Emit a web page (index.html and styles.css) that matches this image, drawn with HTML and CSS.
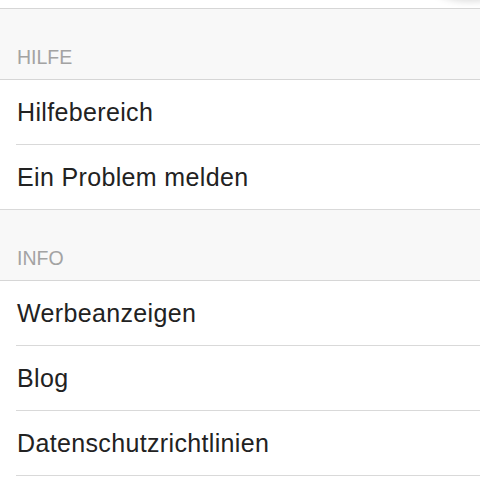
FILE: index.html
```html
<!DOCTYPE html>
<html lang="de">
<head>
<meta charset="utf-8">
<link rel="stylesheet" href="styles.css">
</head>
<body>
<div class="page">
  <div class="prev"></div>
  <div class="fab-shadow"></div>
  <div class="section-header"><span>HILFE</span></div>
  <ul class="list">
    <li class="row">Hilfebereich</li>
    <li class="row last">Ein Problem melden</li>
  </ul>
  <div class="section-header"><span>INFO</span></div>
  <ul class="list">
    <li class="row">Werbeanzeigen</li>
    <li class="row">Blog</li>
    <li class="row">Datenschutzrichtlinien</li>
  </ul>
</div>
</body>
</html>
```
FILE: styles.css
```css
html, body {
  margin: 0;
  padding: 0;
  background: #ffffff;
}
.page {
  position: relative;
  width: 480px;
  height: 480px;
  overflow: hidden;
  font-family: "Liberation Sans", Arial, sans-serif;
}
.prev {
  height: 8px;
  background: #ffffff;
  border-bottom: 1px solid #d6d6d6;
}
.fab-shadow {
  position: absolute;
  right: -30px;
  top: -34px;
  width: 80px;
  height: 36px;
  border-radius: 50%;
  background: rgba(0,0,0,0.12);
  filter: blur(3px);
}
.section-header {
  background: #f8f8f8;
  border-bottom: 1px solid #d6d6d6;
  display: flex;
  align-items: flex-end;
  padding: 0 17px 11px;
  height: 59px;
  color: #a3a3a3;
  font-size: 19.5px;
  line-height: 22px;
}
.list {
  list-style: none;
  margin: 0;
  padding: 0 0 0 16px;
  background: #ffffff;
}
.row {
  height: 64px;
  border-bottom: 1px solid #d9d9d9;
  display: flex;
  align-items: center;
  padding-left: 1px;
  font-size: 25px;
  letter-spacing: 0.35px;
  color: #222222;
}
.row.last {
  margin-left: -16px;
  padding-left: 17px;
}
```
